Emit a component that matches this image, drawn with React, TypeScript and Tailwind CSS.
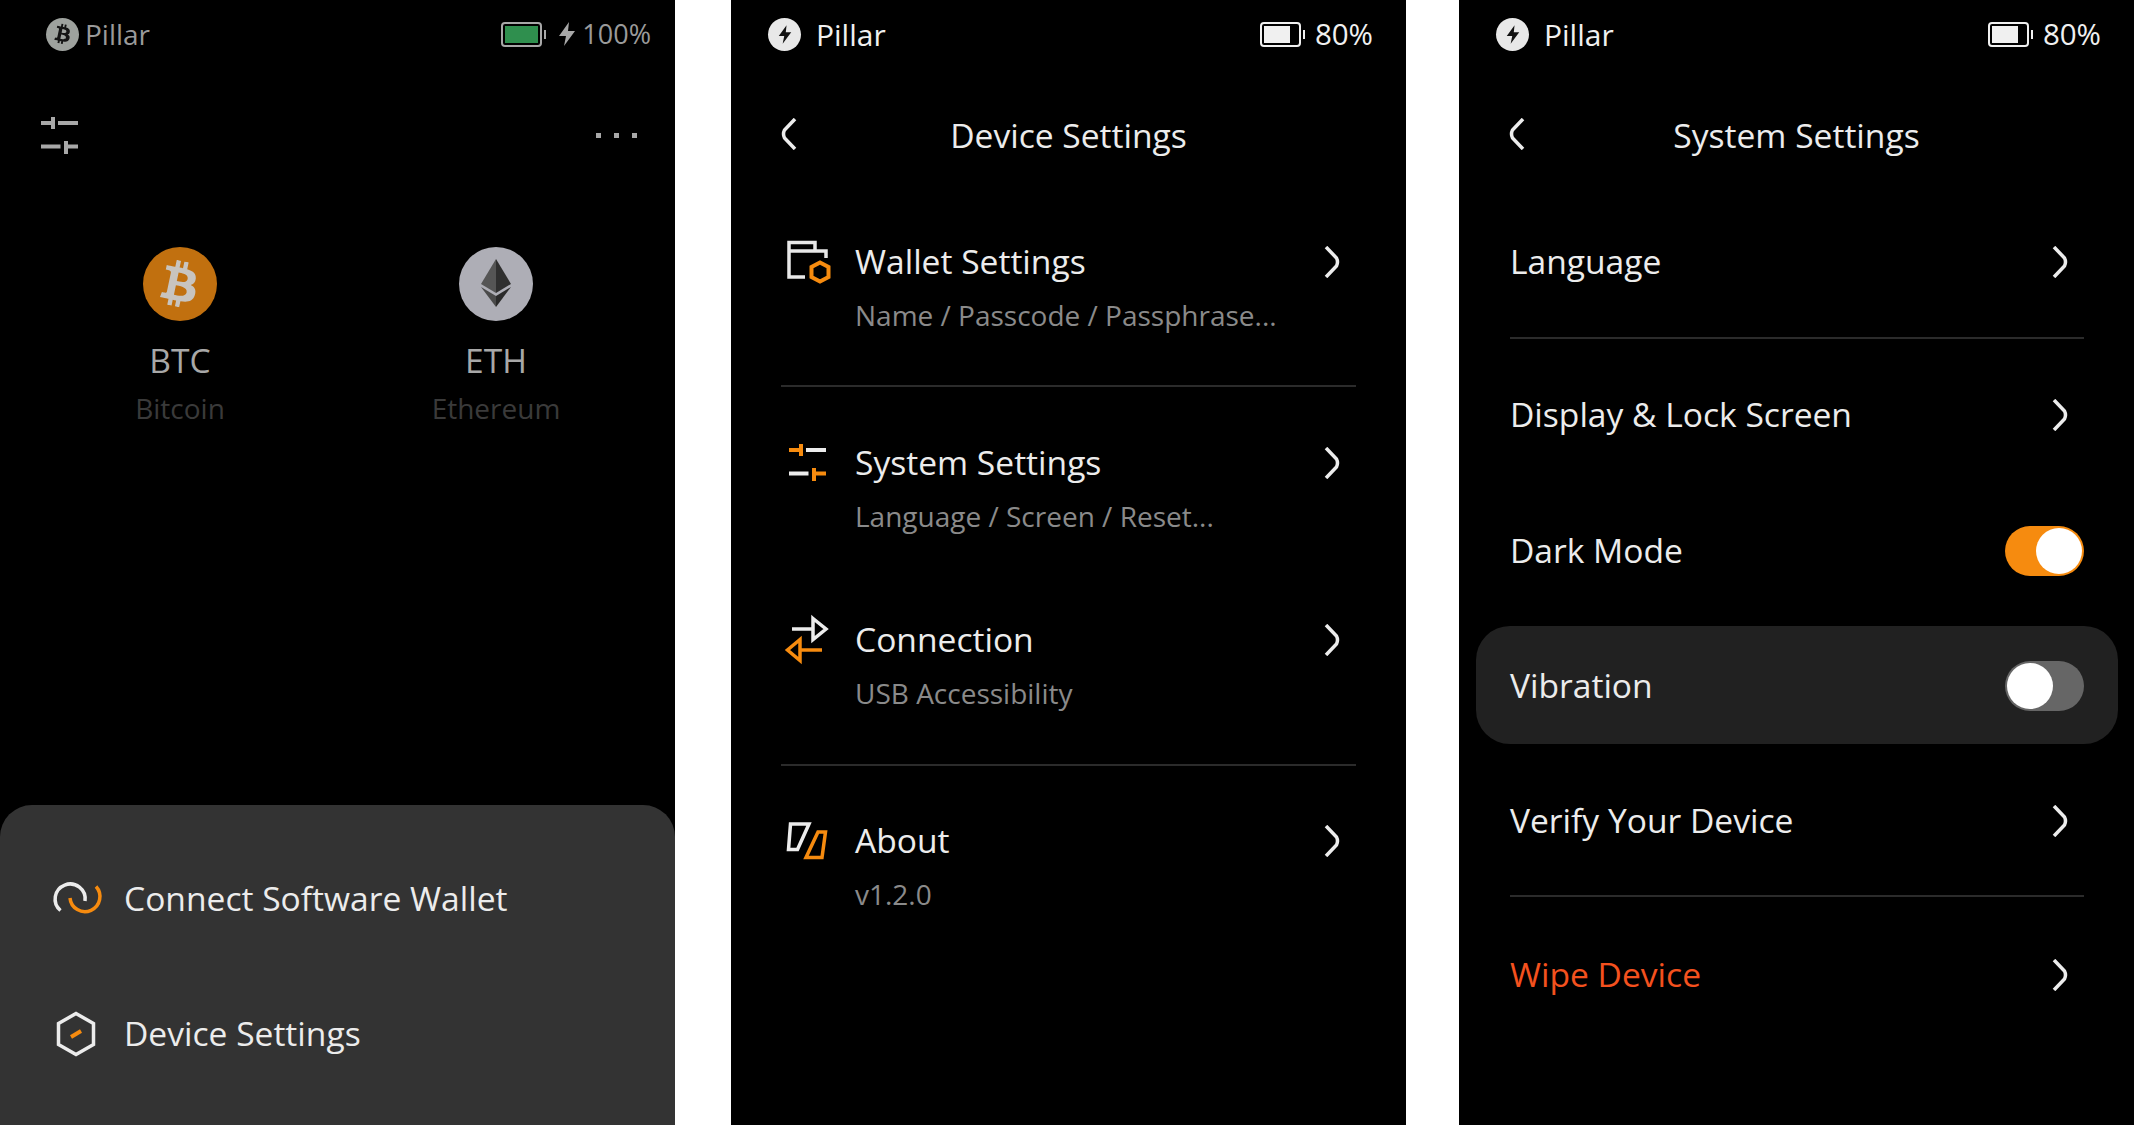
import React from 'react';
import { FaBtc } from 'react-icons/fa';

const ORANGE = '#f68b0f';

const Bolt = ({ className, color }: { className: string; color: string }) => (
  <svg viewBox="0 0 18 24" className={className}>
    <path d="M11 0 L1 14 H8 L6 24 L17 9 H10 Z" fill={color} />
  </svg>
);

const ChevronRight = () => (
  <svg viewBox="0 0 16 32" className="w-[16px] h-[32px] mr-[16px] shrink-0" fill="none" stroke="#ececec" strokeWidth="3.5">
    <path d="M2 1 L12.5 12 Q14.5 16 12.5 20 L2 31" />
  </svg>
);

const ChevronLeft = () => (
  <svg viewBox="0 0 16 32" className="w-[16px] h-[32px]" fill="none" stroke="#ececec" strokeWidth="3.5">
    <path d="M14 1 L3.5 12 Q1.5 16 3.5 20 L14 31" />
  </svg>
);

const Battery = ({ border, fill, width }: { border: string; fill: string; width: string }) => (
  <div className="flex items-center gap-[2px]">
    <div className="w-[41px] h-[25px] rounded-[4px] border-[2.5px] p-[2px]" style={{ borderColor: border }}>
      <div className={`h-full ${width}`} style={{ backgroundColor: fill }} />
    </div>
    <div className="w-[2px] h-[9px]" style={{ backgroundColor: border }} />
  </div>
);

const DeviceStatus = ({ title }: { title: string }) => (
  <>
    <div className="h-[68px] flex items-center pl-[37px] pr-[33px]">
      <div className="w-[33px] h-[33px] rounded-full bg-[#e8e8e8] flex items-center justify-center">
        <Bolt className="w-[14px] h-[19px]" color="#111111" />
      </div>
      <span className="ml-[15px] text-[30px] font-medium text-[#f0f0f0]">Pillar</span>
      <div className="ml-auto flex items-center gap-[10px]">
        <Battery border="#f0f0f0" fill="#f0f0f0" width="w-[80%]" />
        <span className="text-[29.5px] font-medium text-[#f0f0f0]">80%</span>
      </div>
    </div>
    <div className="h-[136px] flex items-center justify-center relative">
      <div className="absolute left-[50px] top-[50px]">
        <ChevronLeft />
      </div>
      <span className="text-[33.6px] pb-[2px] text-[#ececec]">{title}</span>
    </div>
  </>
);

const Divider = ({ className }: { className: string }) => <div className={`h-[2px] bg-[#2b2b2b] ${className}`} />;

const SettingsRow = ({
  icon,
  title,
  sub,
  className,
}: {
  icon: React.ReactNode;
  title: string;
  sub: string;
  className: string;
}) => (
  <div className={`flex items-start ${className}`}>
    <div className="w-[44px] h-[44px] shrink-0">{icon}</div>
    <div className="ml-[25px] flex-1">
      <div className="text-[33.6px] leading-[42px] text-[#ececec]">{title}</div>
      <div className="mt-[14px] text-[28px] leading-[38px] text-[#8a8a8a]">{sub}</div>
    </div>
    <div className="h-[44px] flex items-center">
      <ChevronRight />
    </div>
  </div>
);

const WalletIcon = () => (
  <svg viewBox="0 0 44 44" className="w-[44px] h-[44px] overflow-visible" fill="none" strokeWidth="3.5">
    <path d="M19 37 H3 V2.5 H29 V11 H3 M29 11 H40 V18" stroke="#e8e8e8" />
    <path d="M34 22.5 L42.5 27 V37 L34 41.5 L25.5 37 V27 Z" stroke={ORANGE} strokeWidth="4" />
  </svg>
);

const SlidersIcon = ({ a, b }: { a: string; b: string }) => (
  <svg viewBox="0 0 37 37" className="w-[37px] h-[37px] ml-[3px] mt-[3px] overflow-visible" fill="none" strokeWidth="4">
    <path d="M0 6 H12 M12 0 V12" stroke={a} />
    <path d="M17 6 H37" stroke={b} />
    <path d="M0 29.5 H19.5" stroke={b} />
    <path d="M25 29.5 H37 M25 24 V37" stroke={a} />
  </svg>
);

const ConnectionIcon = () => (
  <svg viewBox="0 0 44 44" className="w-[44px] h-[44px] overflow-visible" fill="none" strokeWidth="3.5">
    <path d="M6 11 H27 M27 0.5 L40 11 L27 21.5 Z" stroke="#ececec" />
    <path d="M36 32 H14 M14 21.5 L1.5 32 L14 42.5 Z" stroke={ORANGE} />
  </svg>
);

const AboutIcon = () => (
  <svg viewBox="0 0 44 44" className="w-[44px] h-[44px] overflow-visible" fill="none" strokeWidth="3.5">
    <path d="M4.5 5 H23 L11.5 30.5 H2.5 Z" stroke="#ececec" />
    <path d="M32 13 H39.5 L36 38.5 H20 Z" stroke={ORANGE} />
  </svg>
);

const Toggle = ({ on }: { on: boolean }) => (
  <div
    className={`w-[79px] h-[50px] rounded-full p-[2px] flex ${on ? 'justify-end bg-[#f68b0f]' : 'justify-start bg-[#666666]'}`}
  >
    <div className="w-[46px] h-[46px] rounded-full bg-white" />
  </div>
);

const SimpleRow = ({
  label,
  className,
  color = 'text-[#ececec]',
  children,
}: {
  label: string;
  className: string;
  color?: string;
  children?: React.ReactNode;
}) => (
  <div className={`h-[44px] flex items-center justify-between ${className}`}>
    <span className={`text-[33.6px] leading-[42px] pb-[2px] ${color}`}>{label}</span>
    {children ?? <ChevronRight />}
  </div>
);

const Coin = ({
  name,
  full,
  children,
  bg,
}: {
  name: string;
  full: string;
  children: React.ReactNode;
  bg: string;
}) => (
  <div className="w-[316px] flex flex-col items-center">
    <div className={`w-[74px] h-[74px] rounded-full flex items-center justify-center ${bg}`}>{children}</div>
    <div className="mt-[18px] text-[33.6px] leading-[42px] text-[#a8a8a8]">{name}</div>
    <div className="mt-[8px] text-[28px] leading-[38px] text-[#3a3a3a]">{full}</div>
  </div>
);

const HomeScreen = () => (
  <div className="w-[675px] h-full bg-black flex flex-col shrink-0 overflow-hidden">
    <div className="h-[68px] flex items-center pl-[46px] pr-[24px]">
      <div className="w-[33px] h-[33px] rounded-full bg-[#9ea29e] flex items-center justify-center">
        <FaBtc className="w-[20px] h-[20px] text-[#141414] rotate-12" />
      </div>
      <span className="ml-[6px] text-[28px] text-[#9a9a9a]">Pillar</span>
      <div className="ml-auto flex items-center">
        <Battery border="#a8a8a8" fill="#2f8f4e" width="w-full" />
        <Bolt className="ml-[12px] w-[18px] h-[24px]" color="#a8a8a8" />
        <span className="ml-[6px] text-[27px] text-[#9a9a9a]">100%</span>
      </div>
    </div>
    <div className="h-[134px] flex items-center justify-between pl-[41px] pr-[38px]">
      <svg viewBox="0 0 37 37" className="w-[37px] h-[37px] overflow-visible" fill="none" stroke="#a8a8a8" strokeWidth="4">
        <path d="M0 6 H12 M12 0 V12 M17 6 H37 M0 29.5 H19.5 M25 29.5 H37 M25 24 V37" />
      </svg>
      <div className="flex gap-[13px]">
        <div className="w-[5px] h-[5px] bg-[#a8a8a8]" />
        <div className="w-[5px] h-[5px] bg-[#a8a8a8]" />
        <div className="w-[5px] h-[5px] bg-[#a8a8a8]" />
      </div>
    </div>
    <div className="mt-[45px] flex pl-[22px]">
      <Coin name="BTC" full="Bitcoin" bg="bg-[#c1700f]">
        <FaBtc className="w-[46px] h-[46px] text-[#c8c4bf] rotate-12" />
      </Coin>
      <Coin name="ETH" full="Ethereum" bg="bg-[#aeaeb6]">
        <svg viewBox="0 0 74 74" className="w-[74px] h-[74px]">
          <polygon points="37,12 22,37 37,46" fill="#555555" />
          <polygon points="37,12 52,37 37,46" fill="#2f2f2f" />
          <polygon points="22,40 37,60 37,49" fill="#4a4a4a" />
          <polygon points="52,40 37,60 37,49" fill="#2a2a2a" />
        </svg>
      </Coin>
    </div>
    <div className="mt-auto h-[320px] bg-[#333333] rounded-t-[32px] pl-[54px] pt-[72px]">
      <div className="h-[44px] flex items-center gap-[26px]">
        <svg viewBox="0 0 44 44" className="w-[44px] h-[44px] overflow-visible" fill="none" strokeWidth="3.5">
          <path d="M6.5 33.5 A15 15 0 1 1 31 24" stroke="#ececec" />
          <path d="M16 21 A15 15 0 1 0 42 9.5" stroke={ORANGE} />
        </svg>
        <span className="text-[33.6px] leading-[42px] pb-[2px] text-[#ececec]">Connect Software Wallet</span>
      </div>
      <div className="mt-[91px] h-[44px] flex items-center gap-[26px]">
        <svg viewBox="0 0 44 44" className="w-[44px] h-[44px] overflow-visible" fill="none" strokeWidth="3.5">
          <path d="M22 1.5 L39.5 11.5 V32.5 L22 42.5 L4.5 32.5 V11.5 Z" stroke="#ececec" />
          <path d="M17 25 L27 19" stroke={ORANGE} strokeWidth="4" />
        </svg>
        <span className="text-[33.6px] leading-[42px] pb-[2px] text-[#ececec]">Device Settings</span>
      </div>
    </div>
  </div>
);

const DeviceSettingsScreen = () => (
  <div className="w-[675px] h-full bg-black flex flex-col shrink-0 overflow-hidden">
    <DeviceStatus title="Device Settings" />
    <div className="px-[50px]">
      <SettingsRow className="mt-[36px] pl-[5px]" icon={<WalletIcon />} title="Wallet Settings" sub="Name / Passcode / Passphrase..." />
      <Divider className="mt-[51px]" />
      <SettingsRow
        className="mt-[54px] pl-[5px]"
        icon={<SlidersIcon a={ORANGE} b="#ececec" />}
        title="System Settings"
        sub="Language / Screen / Reset..."
      />
      <SettingsRow className="mt-[83px] pl-[5px]" icon={<ConnectionIcon />} title="Connection" sub="USB Accessibility" />
      <Divider className="mt-[52px]" />
      <SettingsRow className="mt-[53px] pl-[5px]" icon={<AboutIcon />} title="About" sub="v1.2.0" />
    </div>
  </div>
);

const SystemSettingsScreen = () => (
  <div className="w-[675px] h-full bg-black flex flex-col shrink-0 overflow-hidden">
    <DeviceStatus title="System Settings" />
    <div className="pl-[51px] pr-[50px]">
      <SimpleRow className="mt-[36px]" label="Language" />
      <Divider className="mt-[53px]" />
      <SimpleRow className="mt-[54px]" label="Display & Lock Screen" />
      <SimpleRow className="mt-[92px]" label="Dark Mode">
        <Toggle on />
      </SimpleRow>
    </div>
    <div className="mt-[53px] ml-[17px] mr-[16px] h-[118px] rounded-[34px] bg-[#212121] pl-[34px] pr-[34px] pt-[2px] flex items-center">
      <SimpleRow className="flex-1" label="Vibration">
        <Toggle on={false} />
      </SimpleRow>
    </div>
    <div className="pl-[51px] pr-[50px]">
      <SimpleRow className="mt-[55px]" label="Verify Your Device" />
      <Divider className="mt-[52px]" />
      <SimpleRow className="mt-[56px]" label="Wipe Device" color="text-[#f4511e]" />
    </div>
  </div>
);

export default function App() {
  return (
    <div className="w-[2134px] h-[1125px] bg-white flex font-['Open_Sans',sans-serif] overflow-hidden">
      <HomeScreen />
      <div className="w-[56px] shrink-0" />
      <DeviceSettingsScreen />
      <div className="w-[53px] shrink-0" />
      <SystemSettingsScreen />
    </div>
  );
}
